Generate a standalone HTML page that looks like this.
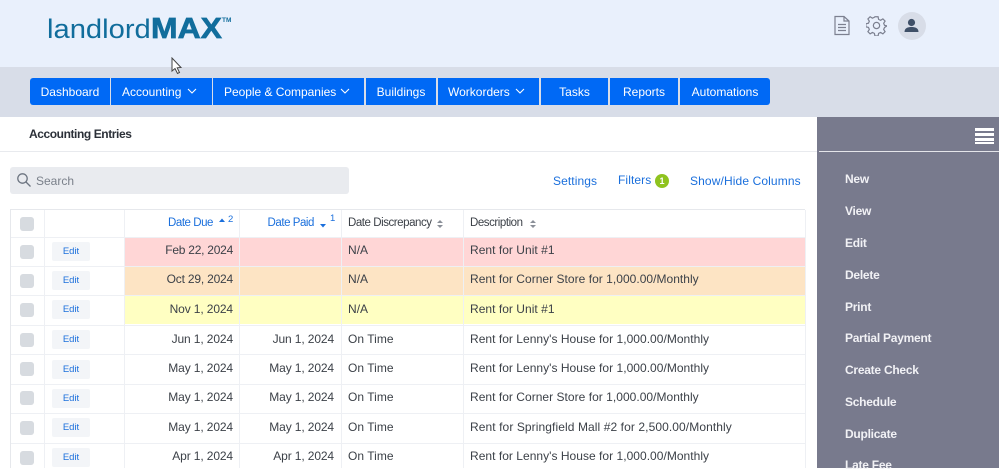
<!DOCTYPE html>
<html><head><meta charset="utf-8"><style>
html,body{margin:0;padding:0;width:999px;height:468px;overflow:hidden;background:#fff;font-family:"Liberation Sans",sans-serif;color:#3c4148}
.a{position:absolute}
.t{position:absolute;white-space:nowrap;line-height:16px;height:16px}
.nav{position:absolute;top:78px;height:27px;background:#0069f5;color:#fff;font-size:12px;line-height:28px;white-space:nowrap;text-align:center}
.side{position:absolute;left:845px;color:#f1f1f5;font-size:12px;line-height:16px;white-space:nowrap;font-weight:bold;letter-spacing:-.25px}
.cb{position:absolute;left:20px;width:14px;height:14px;background:#d7dbe0;border-radius:3px}
.ed{position:absolute;left:52px;width:38px;height:19px;background:#f3f5f8;border-radius:2px;color:#1a6fdc;font-size:9.5px;line-height:19px;text-align:center}
.d{position:absolute;font-size:12px;line-height:16px;text-align:right;white-space:nowrap;letter-spacing:-.12px}
.x{position:absolute;font-size:12px;line-height:16px;white-space:nowrap;letter-spacing:.03px}
.h{position:absolute;height:1px;left:10px;width:795px;background:#eef0f4}
.v{position:absolute;width:1px;top:210px;height:258px;background:#eef0f4}
.l{position:absolute;color:#1a6fdc;font-size:12px;line-height:16px;white-space:nowrap}
.hd{letter-spacing:-.45px;font-size:11.5px}
</style></head><body>
<div class="a" style="left:0;top:0;width:999px;height:67px;background:#e9f0fc"></div>
<div class="a" style="left:0;top:67px;width:999px;height:50px;background:#d8dde8"></div>

<div class="t" style="left:47px;top:14px;height:30px;line-height:30px;font-size:27px;color:#116d9c;transform:scaleX(1.08);transform-origin:0 50%">landlord</div>
<div class="t" style="left:151px;top:14px;height:30px;line-height:30px;font-size:29px;font-weight:bold;color:#116d9c;transform:scaleX(1.1);transform-origin:0 50%;-webkit-text-stroke:.7px #116d9c">MAX</div>
<div class="t" style="left:222px;top:17px;font-size:6.5px;line-height:8px;height:8px;color:#116d9c;font-weight:bold">TM</div>

<svg class="a" style="left:170px;top:57px" width="14" height="18" viewBox="0 0 14 18"><path d="M2 1 L2 14 L5 11.5 L7.5 16.5 L9.5 15.5 L7.2 10.8 L11 10.5 Z" fill="#fff" stroke="#444" stroke-width="1"/></svg>

<svg class="a" style="left:833px;top:15px" width="18" height="21" viewBox="0 0 18 21" fill="none" stroke="#7c8090" stroke-width="1.2"><path d="M2 1.5 H11 L16 6 V19.5 H2 Z"/><path d="M11 1.5 V6 H16" /><path d="M5 9.5 H13 M5 12.5 H13 M5 15.5 H13"/></svg>
<svg class="a" style="left:866px;top:15px" width="21" height="21" viewBox="0 0 24 24" fill="none" stroke="#7c8090" stroke-width="1.4"><circle cx="12" cy="12" r="3.6"/><path d="M10.2 2h3.6l.6 3 2.3 1 2.6-1.6 2.5 2.5-1.6 2.6 1 2.3 3 .6v0l-3 1.8-1 2.3 1.6 2.6-2.5 2.5-2.6-1.6-2.3 1-.6 3h-3.6l-.6-3-2.3-1-2.6 1.6-2.5-2.5 1.6-2.6-1-2.3-3-.6v-3.6l3-.6 1-2.3-1.6-2.6 2.5-2.5 2.6 1.6 2.3-1z"/></svg>
<div class="a" style="left:898px;top:12px;width:28px;height:28px;border-radius:50%;background:#d8dde8"></div>
<svg class="a" style="left:898px;top:12px" width="27" height="27" viewBox="0 0 27 27" fill="#3f5068"><circle cx="13.5" cy="10.5" r="3.6"/><path d="M6.5 20 C6.5 16 10 15 13.5 15 C17 15 20.5 16 20.5 20 Z"/></svg>

<div class="nav" style="left:30px;width:80px;border-radius:3px 0 0 3px">Dashboard</div>
<div class="nav" style="left:111px;width:101px;text-align:left;text-indent:11px">Accounting</div>
<div class="nav" style="left:213px;width:151px;text-align:left;text-indent:11px;letter-spacing:-.03px">People &amp; Companies</div>
<div class="nav" style="left:366px;width:70px">Buildings</div>
<div class="nav" style="left:438px;width:101px;text-align:left;text-indent:10px">Workorders</div>
<div class="nav" style="left:541px;width:67px">Tasks</div>
<div class="nav" style="left:610px;width:68px">Reports</div>
<div class="nav" style="left:680px;width:90px;border-radius:0 3px 3px 0">Automations</div>
<svg class="a" style="left:187px;top:87px" width="10" height="8" viewBox="0 0 10 8" fill="none" stroke="#fff" stroke-width="1.1"><path d="M1 2 L5 6 L9 2"/></svg>
<svg class="a" style="left:340px;top:87px" width="10" height="8" viewBox="0 0 10 8" fill="none" stroke="#fff" stroke-width="1.1"><path d="M1 2 L5 6 L9 2"/></svg>
<svg class="a" style="left:515px;top:87px" width="10" height="8" viewBox="0 0 10 8" fill="none" stroke="#fff" stroke-width="1.1"><path d="M1 2 L5 6 L9 2"/></svg>

<div class="t" style="left:29px;top:126px;font-size:12px;font-weight:bold;color:#2b3038;letter-spacing:-.42px">Accounting Entries</div>
<div class="a" style="left:0;top:151px;width:817px;height:1px;background:#e8eaee"></div>

<div class="a" style="left:10px;top:167px;width:339px;height:27px;background:#e9ebef;border-radius:3px"></div>
<svg class="a" style="left:16px;top:172px" width="16" height="16" viewBox="0 0 16 16" fill="none" stroke="#6c7480" stroke-width="1.3"><circle cx="6.5" cy="6.5" r="4.7"/><path d="M10 10 L14.5 14.5"/></svg>
<div class="t" style="left:36px;top:173px;font-size:12px;color:#7a808a">Search</div>

<div class="l" style="left:553px;top:173px;letter-spacing:.1px">Settings</div>
<div class="l" style="left:618px;top:172px;letter-spacing:.1px">Filters</div>
<div class="a" style="left:655px;top:174px;width:14px;height:14px;border-radius:50%;background:#8fc31f;color:#fff;font-size:9px;font-weight:bold;line-height:14px;text-align:center">1</div>
<div class="l" style="left:690px;top:173px;letter-spacing:.12px">Show/Hide Columns</div>

<div class="a" style="left:124px;top:238px;width:681px;height:28px;background:#ffd6d6"></div>
<div class="a" style="left:124px;top:267px;width:681px;height:28px;background:#fde4c4"></div>
<div class="a" style="left:124px;top:296px;width:681px;height:28px;background:#ffffc2"></div>

<div class="h" style="top:209px;background:#e6e8ec"></div>
<div class="h" style="top:237px"></div>
<div class="h" style="top:266px"></div>
<div class="h" style="top:295px"></div>
<div class="h" style="top:325px"></div>
<div class="h" style="top:354px"></div>
<div class="h" style="top:384px"></div>
<div class="h" style="top:413px"></div>
<div class="h" style="top:443px"></div>
<div class="v" style="left:10px;background:#e6e8ec"></div>
<div class="v" style="left:44px"></div>
<div class="v" style="left:124px"></div>
<div class="v" style="left:239px"></div>
<div class="v" style="left:341px"></div>
<div class="v" style="left:463px"></div>
<div class="v" style="left:805px"></div>

<div class="cb" style="top:217px"></div>
<div class="l hd" style="right:786px;top:215px">Date Due</div>
<svg class="a" style="left:218px;top:217px" width="8" height="6"><path d="M1 5 L4 1.5 L7 5 Z" fill="#1a6fdc"/></svg>
<div class="l" style="left:228px;top:213px;font-size:9.5px;line-height:14px">2</div>
<div class="l hd" style="right:685px;top:215px">Date Paid</div>
<svg class="a" style="left:319px;top:223px" width="8" height="6"><path d="M1 1 L4 4.5 L7 1 Z" fill="#1a6fdc"/></svg>
<div class="l" style="left:330px;top:212px;font-size:9.5px;line-height:14px">1</div>
<div class="x hd" style="left:348px;top:215px">Date Discrepancy</div>
<svg class="a" style="left:436px;top:219px" width="8" height="10" fill="#8a8f98"><path d="M1 4 L4 1 L7 4 Z M1 6 L4 9 L7 6 Z"/></svg>
<div class="x hd" style="left:470px;top:215px">Description</div>
<svg class="a" style="left:529px;top:219px" width="8" height="10" fill="#8a8f98"><path d="M1 4 L4 1 L7 4 Z M1 6 L4 9 L7 6 Z"/></svg>

<div class="cb" style="top:245px"></div><div class="ed" style="top:242px">Edit</div>
<div class="d" style="right:766px;top:242px;letter-spacing:-.25px">Feb 22, 2024</div><div class="x" style="left:348px;top:242px">N/A</div><div class="x" style="left:470px;top:242px">Rent for Unit #1</div>

<div class="cb" style="top:274px"></div><div class="ed" style="top:271px">Edit</div>
<div class="d" style="right:766px;top:271px;letter-spacing:-.2px">Oct 29, 2024</div><div class="x" style="left:348px;top:271px">N/A</div><div class="x" style="left:470px;top:271px">Rent for Corner Store for 1,000.00/Monthly</div>

<div class="cb" style="top:303px"></div><div class="ed" style="top:300px">Edit</div>
<div class="d" style="right:766px;top:301px">Nov 1, 2024</div><div class="x" style="left:348px;top:301px">N/A</div><div class="x" style="left:470px;top:301px">Rent for Unit #1</div>

<div class="cb" style="top:333px"></div><div class="ed" style="top:330px">Edit</div>
<div class="d" style="right:766px;top:331px">Jun 1, 2024</div><div class="d" style="right:665px;top:331px">Jun 1, 2024</div><div class="x" style="left:348px;top:331px">On Time</div><div class="x" style="left:470px;top:331px">Rent for Lenny's House for 1,000.00/Monthly</div>

<div class="cb" style="top:362px"></div><div class="ed" style="top:360px">Edit</div>
<div class="d" style="right:766px;top:360px">May 1, 2024</div><div class="d" style="right:665px;top:360px">May 1, 2024</div><div class="x" style="left:348px;top:360px">On Time</div><div class="x" style="left:470px;top:360px">Rent for Lenny's House for 1,000.00/Monthly</div>

<div class="cb" style="top:391px"></div><div class="ed" style="top:389px">Edit</div>
<div class="d" style="right:766px;top:389px">May 1, 2024</div><div class="d" style="right:665px;top:389px">May 1, 2024</div><div class="x" style="left:348px;top:389px">On Time</div><div class="x" style="left:470px;top:389px">Rent for Corner Store for 1,000.00/Monthly</div>

<div class="cb" style="top:421px"></div><div class="ed" style="top:418px">Edit</div>
<div class="d" style="right:766px;top:419px">May 1, 2024</div><div class="d" style="right:665px;top:419px">May 1, 2024</div><div class="x" style="left:348px;top:419px">On Time</div><div class="x" style="left:470px;top:419px;letter-spacing:.09px">Rent for Springfield Mall #2 for 2,500.00/Monthly</div>

<div class="cb" style="top:451px"></div><div class="ed" style="top:448px">Edit</div>
<div class="d" style="right:766px;top:448px">Apr 1, 2024</div><div class="d" style="right:665px;top:448px">Apr 1, 2024</div><div class="x" style="left:348px;top:448px">On Time</div><div class="x" style="left:470px;top:448px">Rent for Lenny's House for 1,000.00/Monthly</div>

<div class="a" style="left:817px;top:117px;width:182px;height:351px;background:#787a8d"></div>
<div class="a" style="left:819px;top:151px;width:180px;height:1px;background:#e4e5ea"></div>
<div class="a" style="left:975px;top:128px;width:19px;height:3px;background:#fff"></div>
<div class="a" style="left:975px;top:133px;width:19px;height:3px;background:#fff"></div>
<div class="a" style="left:975px;top:138px;width:19px;height:3px;background:#fff"></div>
<div class="a" style="left:975px;top:142px;width:19px;height:2px;background:#fff"></div>
<div class="side" style="top:171px">New</div>
<div class="side" style="top:203px">View</div>
<div class="side" style="top:235px">Edit</div>
<div class="side" style="top:267px">Delete</div>
<div class="side" style="top:299px">Print</div>
<div class="side" style="top:330px">Partial Payment</div>
<div class="side" style="top:362px">Create Check</div>
<div class="side" style="top:394px">Schedule</div>
<div class="side" style="top:426px">Duplicate</div>
<div class="side" style="top:457px">Late Fee</div>
</body></html>
